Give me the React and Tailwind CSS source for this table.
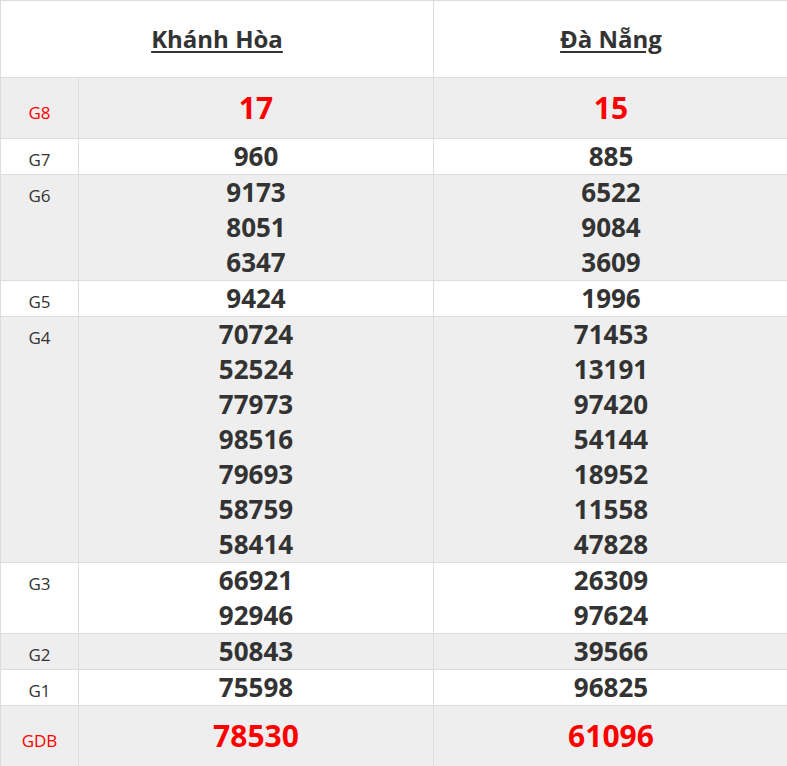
import React from "react";

const rows = [
  { label: "G8", a: ["17"], b: ["15"], special: true, bg: "bg-[#eeeeee]" },
  { label: "G7", a: ["960"], b: ["885"], bg: "bg-white" },
  { label: "G6", a: ["9173", "8051", "6347"], b: ["6522", "9084", "3609"], bg: "bg-[#eeeeee]" },
  { label: "G5", a: ["9424"], b: ["1996"], bg: "bg-white" },
  {
    label: "G4",
    a: ["70724", "52524", "77973", "98516", "79693", "58759", "58414"],
    b: ["71453", "13191", "97420", "54144", "18952", "11558", "47828"],
    bg: "bg-[#eeeeee]",
  },
  { label: "G3", a: ["66921", "92946"], b: ["26309", "97624"], bg: "bg-white" },
  { label: "G2", a: ["50843"], b: ["39566"], bg: "bg-[#eeeeee]" },
  { label: "G1", a: ["75598"], b: ["96825"], bg: "bg-white" },
  { label: "GDB", a: ["78530"], b: ["61096"], special: true, bg: "bg-[#eeeeee]" },
];

function Nums({ list, special }) {
  return (
    <>
      {list.map((n, i) => (
        <div
          key={i}
          className={
            special
              ? "text-[30px] leading-[60px] font-bold text-[#ff0000]"
              : "text-[26px] leading-[35px] font-bold text-[#333333]"
          }
        >
          {n}
        </div>
      ))}
    </>
  );
}

export default function App() {
  return (
    <div className="w-[787px] h-[766px] overflow-hidden bg-white" style={{ fontFamily: '"Open Sans", "Liberation Sans", sans-serif' }}>
      <table className="w-[788px] border-collapse table-fixed">
        <colgroup>
          <col className="w-[78px]" />
          <col className="w-[355px]" />
          <col className="w-[355px]" />
        </colgroup>
        <tbody>
          <tr className="bg-white h-[77px]">
            <td colSpan={2} className="border border-[#dddddd] p-0 text-center align-middle">
              <span className="text-[24px] font-bold underline text-[#333333] decoration-2 underline-offset-[3px]">Khánh Hòa</span>
            </td>
            <td className="border border-[#dddddd] p-0 text-center align-middle">
              <span className="text-[24px] font-bold underline text-[#333333] decoration-2 underline-offset-[3px]">Đà Nẵng</span>
            </td>
          </tr>
          {rows.map((r) => (
            <tr key={r.label} className={r.bg}>
              <td
                className={
                  "border border-[#dddddd] p-0 text-center align-baseline text-[17px] leading-[20px] " +
                  (r.special ? "text-[#ff0000]" : "text-[#333333]")
                }
              >
                {r.label}
              </td>
              <td className="border border-[#dddddd] p-0 text-center align-baseline">
                <Nums list={r.a} special={r.special} />
              </td>
              <td className="border border-[#dddddd] p-0 text-center align-baseline">
                <Nums list={r.b} special={r.special} />
              </td>
            </tr>
          ))}
        </tbody>
      </table>
    </div>
  );
}
